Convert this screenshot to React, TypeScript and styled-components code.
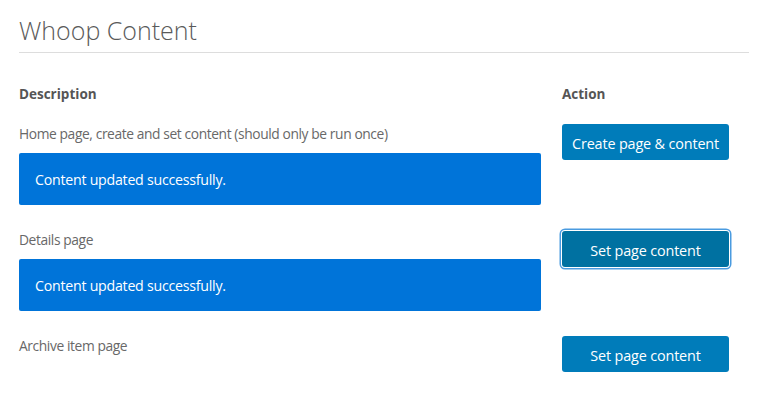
import {createGlobalStyle, styled} from "styled-components";

const GlobalStyle = createGlobalStyle`
  html, body {
    margin: 0;
    padding: 0;
    background: #ffffff;
  }
  body {
    font-family: "Open Sans", "Noto Sans", "Liberation Sans", sans-serif;
    color: #555d66;
  }
`;

const Page = styled.div`
  padding: 14px 19px 0 19px;
`;

const Title = styled.h1`
  margin: 0;
  padding-bottom: 6px;
  border-bottom: 1px solid #dddddd;
  font-size: 25px;
  font-weight: 300;
  line-height: 32px;
  color: #5a5a5a;
`;

const Table = styled.div`
  display: grid;
  grid-template-columns: 522px 1fr;
  column-gap: 21px;
  margin-top: 31px;
`;

const HeadCell = styled.div`
  font-size: 13.5px;
  font-weight: 700;
  line-height: 20px;
  color: #555555;
  padding-bottom: 20px;
`;

const Cell = styled.div<{last?: boolean}>`
  display: flex;
  flex-direction: column;
  align-items: flex-start;
  padding-bottom: ${(props) => (props.last ? "0" : "25px")};
`;

const Label = styled.div`
  font-size: 13.8px;
  line-height: 20px;
  color: #686868;
  letter-spacing: -0.4px;
`;

const Notice = styled.div`
  align-self: stretch;
  margin-top: 9px;
  height: 52px;
  box-sizing: border-box;
  padding: 0 16px;
  display: flex;
  align-items: center;
  background: #0074d9;
  border-radius: 2px;
  color: #ffffff;
  font-size: 14.2px;
  letter-spacing: -0.25px;
`;

const Button = styled.button<{focused?: boolean}>`
  width: 167px;
  height: 36px;
  padding: 2px 8px 0 8px;
  border: none;
  border-radius: 3px;
  font-family: inherit;
  font-size: 14.4px;
  letter-spacing: -0.15px;
  color: #ffffff;
  cursor: pointer;
  background: ${(props) => (props.focused ? "#0071a1" : "#007cba")};
  box-shadow: ${(props) =>
    props.focused ? "0 0 0 1px #ffffff, 0 0 0 2.5px #4a9be0" : "none"};
  margin-top: ${(props) => (props.focused ? "1px" : "0")};
`;

const rows = [
  {
    label: "Home page, create and set content (should only be run once)",
    notice: "Content updated successfully.",
    action: "Create page & content",
    focused: false,
  },
  {
    label: "Details page",
    notice: "Content updated successfully.",
    action: "Set page content",
    focused: true,
  },
  {
    label: "Archive item page",
    notice: "",
    action: "Set page content",
    focused: false,
  },
];

function App() {
  return (
    <>
      <GlobalStyle />
      <Page>
        <Title>Whoop Content</Title>
        <Table>
          <HeadCell>Description</HeadCell>
          <HeadCell>Action</HeadCell>
          {rows.map((row, i) => {
            const last = i === rows.length - 1;
            return [
              <Cell key={"d" + i} last={last}>
                <Label>{row.label}</Label>
                {row.notice && <Notice>{row.notice}</Notice>}
              </Cell>,
              <Cell key={"a" + i} last={last}>
                <Button focused={row.focused}>{row.action}</Button>
              </Cell>,
            ];
          })}
        </Table>
      </Page>
    </>
  );
}

export default App;
